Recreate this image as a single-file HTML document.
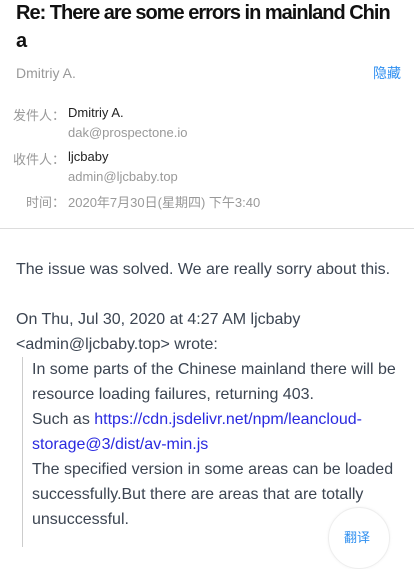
<!DOCTYPE html>
<html><head><meta charset="utf-8"><style>
body{margin:0;width:414px;height:531px;overflow:hidden;background:#fff;font-family:"Liberation Sans","Noto Sans CJK SC",sans-serif;position:relative}
.a{position:absolute;white-space:nowrap}
h1{position:absolute;left:16px;top:-1px;width:400px;margin:0;font-size:20px;line-height:28px;font-weight:bold;color:#111;letter-spacing:-1px;white-space:nowrap}
.g{color:#999}
.lab{color:#999;font-size:13px;text-align:right;width:52px;left:13px}
.v{left:68px;font-size:13px;color:#222}
.body{position:absolute;left:16px;top:257px;font-size:16px;line-height:25px;color:#3c4552;width:390px}
.q{position:absolute;left:22px;top:357px;border-left:1px solid #ccc;padding-left:9px;font-size:16px;line-height:25px;color:#3c4552;width:378px;height:190px}
a{color:#2a2ae0;text-decoration:none}
</style></head><body>
<h1>Re: There are some errors in mainland Chin<br>a</h1>
<div class="a g" style="left:16px;top:65px;font-size:14px">Dmitriy A.</div>
<div class="a" style="left:373px;top:63px;font-size:14px;color:#2f8ff0">隐藏</div>
<div class="a lab" style="top:105px">发件人：</div><div class="a v" style="top:105px">Dmitriy A.</div>
<div class="a v g" style="top:125px;color:#999">dak@prospectone.io</div>
<div class="a lab" style="top:149px">收件人：</div><div class="a v" style="top:149px">ljcbaby</div>
<div class="a v" style="top:169px;color:#999">admin@ljcbaby.top</div>
<div class="a lab" style="top:192px">时间：</div><div class="a v" style="top:192px;color:#999">2020年7月30日(星期四) 下午3:40</div>
<div class="a" style="left:0;top:228px;width:414px;height:1px;background:#ddd"></div>
<div class="body">The issue was solved. We are really sorry about this.<br><br>On Thu, Jul 30, 2020 at 4:27 AM ljcbaby<br>&lt;admin@ljcbaby.top&gt; wrote:</div>
<div class="q">In some parts of the Chinese mainland there will be<br>resource loading failures, returning 403.<br>Such as <a>https://cdn.jsdelivr.net/npm/leancloud-<br>storage@3/dist/av-min.js</a><br>The specified version in some areas can be loaded<br>successfully.But there are areas that are totally<br>unsuccessful.</div>
<div class="a" style="left:328px;top:507px;width:60px;height:60px;border-radius:50%;background:#fff;border:1px solid #eee;box-shadow:0 0 3px rgba(0,0,0,.05)"></div>
<div class="a" style="left:344px;top:527px;font-size:13px;color:#2f8ff0">翻译</div>
</body></html>
